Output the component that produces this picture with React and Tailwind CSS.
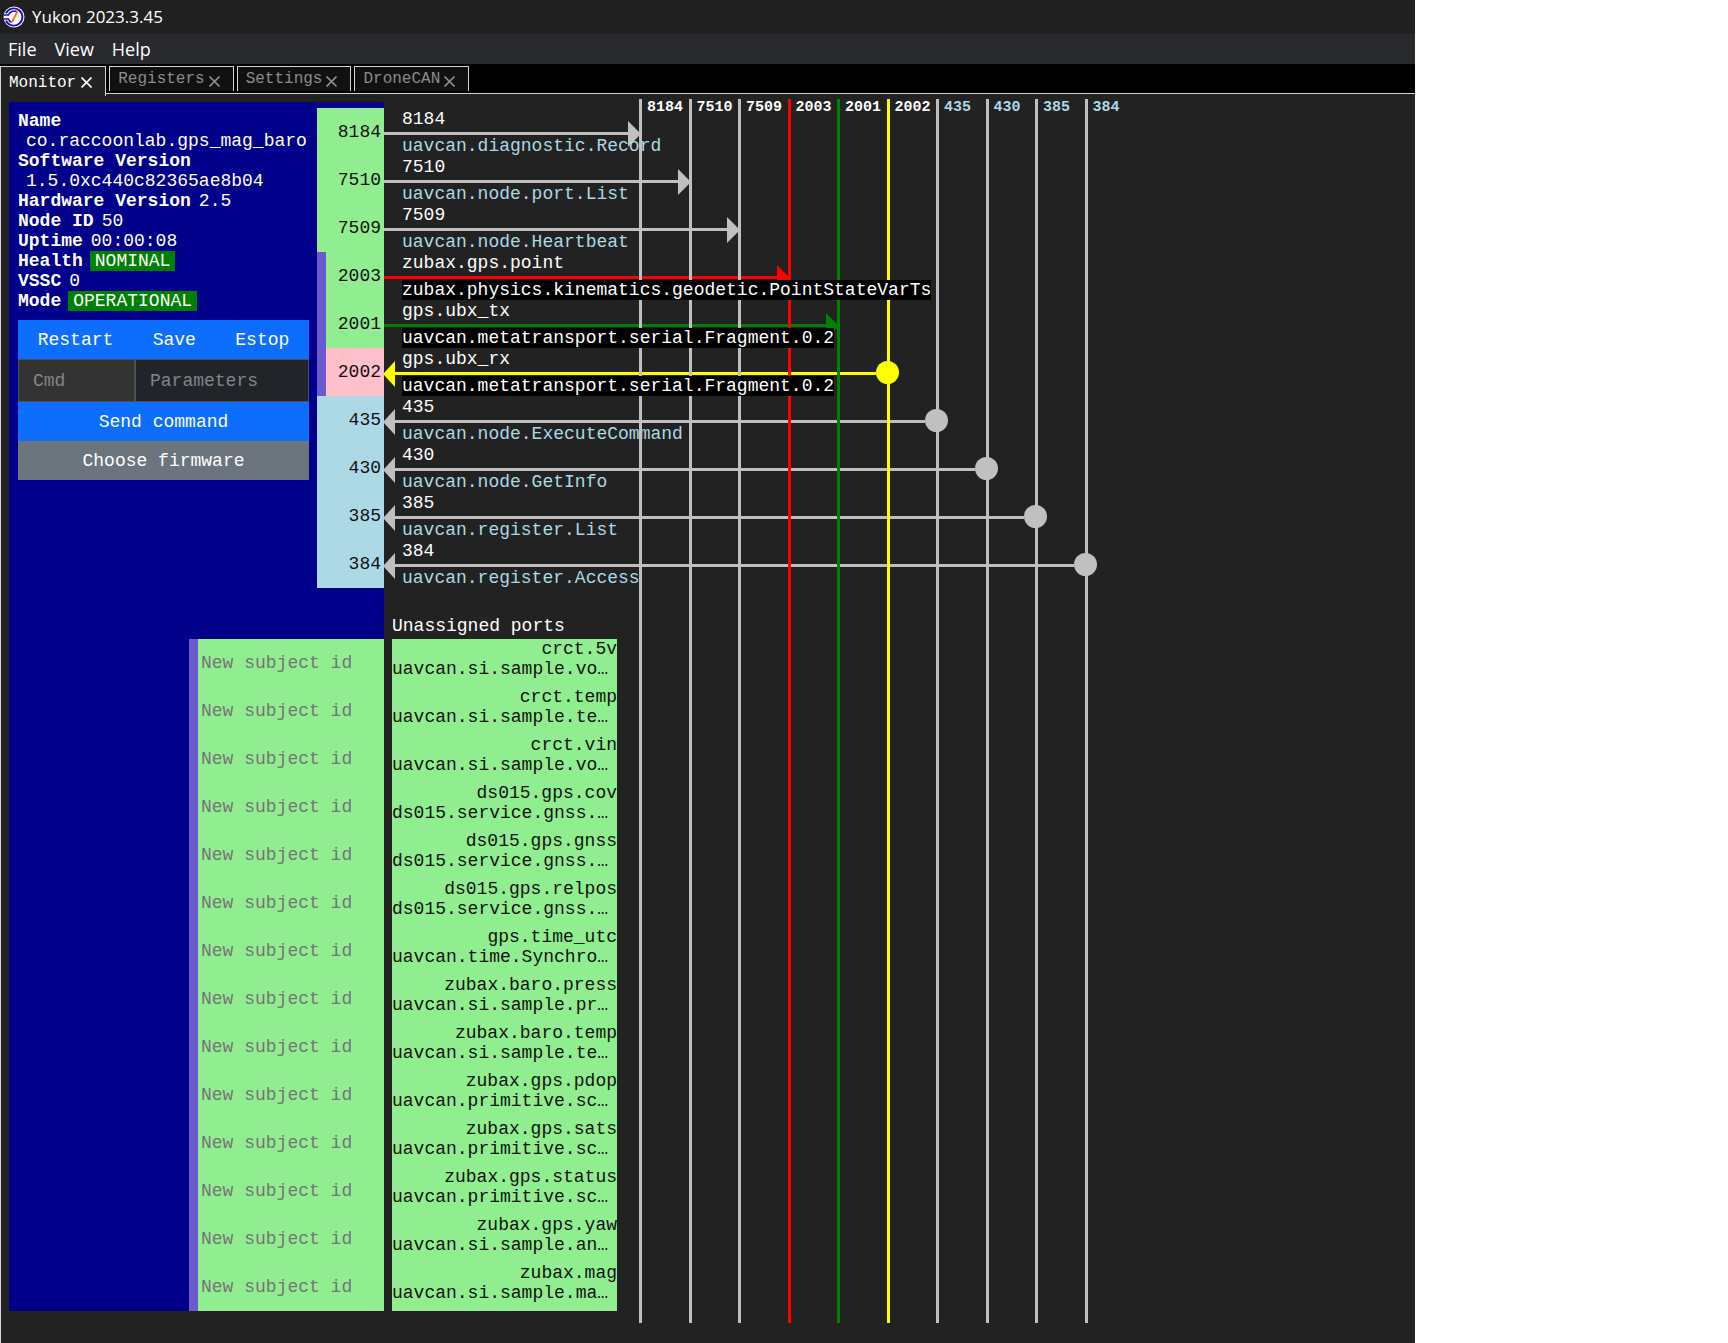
const WIRE_START = 255;
const BUS_PITCH = 49.5;

const tabs = ["Registers", "Settings", "DroneCAN"];

const menus = ["File", "View", "Help"];

const info = [
  { label: "Hardware Version", value: "2.5" },
  { label: "Node ID", value: "50" },
  { label: "Uptime", value: "00:00:08" },
  { label: "Health", value: "NOMINAL", badge: true },
  { label: "VSSC", value: "0" },
  { label: "Mode", value: "OPERATIONAL", badge: true },
];

const silver = { wire: "bg-[#c0c0c0]", fill: "fill-[#c0c0c0]", bus: "border-[#c0c0c0]" };
const red = { wire: "bg-[#ff0000]", fill: "fill-[#ff0000]", bus: "border-[#ff0000]" };
const green = { wire: "bg-[#008000]", fill: "fill-[#008000]", bus: "border-[#008000]" };
const yellow = { wire: "bg-[#ffff00]", fill: "fill-[#ffff00]", bus: "border-[#ffff00]" };

const pub = "bg-[#90ee90]";
const sub = "bg-[#ffc0cb]";
const srv = "bg-[#add8e6]";

const ports = [
  { id: "8184", name: "8184", type: "uavcan.diagnostic.Record", out: true, cell: pub, color: silver },
  { id: "7510", name: "7510", type: "uavcan.node.port.List", out: true, cell: pub, color: silver },
  { id: "7509", name: "7509", type: "uavcan.node.Heartbeat", out: true, cell: pub, color: silver },
  { id: "2003", name: "zubax.gps.point", type: "zubax.physics.kinematics.geodetic.PointStateVarTs", out: true, cell: pub, color: red, named: true },
  { id: "2001", name: "gps.ubx_tx", type: "uavcan.metatransport.serial.Fragment.0.2", out: true, cell: pub, color: green, named: true },
  { id: "2002", name: "gps.ubx_rx", type: "uavcan.metatransport.serial.Fragment.0.2", cell: sub, color: yellow, named: true },
  { id: "435", name: "435", type: "uavcan.node.ExecuteCommand", cell: srv, color: silver, service: true },
  { id: "430", name: "430", type: "uavcan.node.GetInfo", cell: srv, color: silver, service: true },
  { id: "385", name: "385", type: "uavcan.register.List", cell: srv, color: silver, service: true },
  { id: "384", name: "384", type: "uavcan.register.Access", cell: srv, color: silver, service: true },
];

const unassigned = [
  ["crct.5v", "uavcan.si.sample.vo…"],
  ["crct.temp", "uavcan.si.sample.te…"],
  ["crct.vin", "uavcan.si.sample.vo…"],
  ["ds015.gps.cov", "ds015.service.gnss.…"],
  ["ds015.gps.gnss", "ds015.service.gnss.…"],
  ["ds015.gps.relpos", "ds015.service.gnss.…"],
  ["gps.time_utc", "uavcan.time.Synchro…"],
  ["zubax.baro.press", "uavcan.si.sample.pr…"],
  ["zubax.baro.temp", "uavcan.si.sample.te…"],
  ["zubax.gps.pdop", "uavcan.primitive.sc…"],
  ["zubax.gps.sats", "uavcan.primitive.sc…"],
  ["zubax.gps.status", "uavcan.primitive.sc…"],
  ["zubax.gps.yaw", "uavcan.si.sample.an…"],
  ["zubax.mag", "uavcan.si.sample.ma…"],
];

function Logo() {
  return (
    <svg className="size-[22px]" viewBox="0 0 22 22" fill="none" aria-hidden="true">
      <circle cx="11" cy="11" r="10.5" fill="#fff" />
      <path d="M3 7.4A8.6 8.6 0 1 1 3 14.6" stroke="#1f10b0" strokeWidth="1.9" />
      <path d="M0.5 9H5.4A6 6 0 0 1 14 5.8M0.5 13H5.4A6 6 0 0 0 8.4 16.4" stroke="#1f10b0" strokeWidth="1.6" />
      <path d="M14.4 5.4L8.8 16.6" stroke="#ff6a13" strokeWidth="1.9" />
    </svg>
  );
}

function CloseMark() {
  return (
    <svg className="size-[11px] shrink-0" viewBox="0 0 11 11" fill="none" stroke="currentColor" strokeWidth="1.6" aria-hidden="true">
      <path d="M0.5 0.5L10.5 10.5M10.5 0.5L0.5 10.5" />
    </svg>
  );
}

function Tabs() {
  return (
    <div role="tablist" className="flex h-[30px] items-start gap-[3px] bg-black pt-[2px] text-base">
      <button
        role="tab"
        aria-selected="true"
        className="relative z-10 flex h-[30px] items-center gap-[5px] border border-b-0 border-[#d3d3d3] bg-[#222222] pt-[2px] pr-[13px] pl-2 text-white"
      >
        Monitor
        <CloseMark />
      </button>
      {tabs.map((t) => (
        <button
          key={t}
          role="tab"
          aria-selected="false"
          className="flex h-[25px] items-center gap-1 border border-b-0 border-[#d3d3d3] bg-[#111111] pr-[13px] pl-2 text-[#8c8c8c]"
        >
          {t}
          <span className="pt-[5px]">
            <CloseMark />
          </span>
        </button>
      ))}
    </div>
  );
}

function NodeInfo() {
  return (
    <div className="w-[291px] pt-[3px]">
      <dl className="whitespace-nowrap">
        <dt className="font-bold">Name</dt>
        <dd className="pl-2">co.raccoonlab.gps_mag_baro</dd>
        <dt className="font-bold">Software Version</dt>
        <dd className="pl-2">1.5.0xc440c82365ae8b04</dd>
        {info.map((i) => (
          <div key={i.label} className="flex">
            <dt className="font-bold">{i.label}</dt>
            <dd className={i.badge ? "ml-[7px] bg-[#008000] px-[5px]" : "ml-2"}>{i.value}</dd>
          </div>
        ))}
      </dl>
      <form className="mt-[9px]" onSubmit={(e) => e.preventDefault()}>
        <div className="flex bg-[#0d6efd]">
          <button type="button" className="h-[39px] flex-auto">Restart</button>
          <button type="button" className="h-[39px] flex-auto">Save</button>
          <button type="button" className="h-[39px] flex-auto">Estop</button>
        </div>
        <div className="flex h-[43px]">
          <input
            aria-label="Cmd"
            placeholder="Cmd"
            className="w-[117px] border border-[#495057] bg-[#333333] px-[14px] placeholder:text-[#80868a]"
          />
          <input
            aria-label="Parameters"
            placeholder="Parameters"
            className="w-0 flex-1 border border-[#495057] bg-[#212529] px-[14px] placeholder:text-[#80868a]"
          />
        </div>
        <button type="submit" className="h-[39px] w-full bg-[#0d6efd]">Send command</button>
        <button type="button" className="h-[39px] w-full bg-[#6c757d]">Choose firmware</button>
      </form>
    </div>
  );
}

function NodePanel() {
  return (
    <aside className="mt-2 w-[375px] shrink-0 self-start bg-[#00008b] pt-[6px]">
      <div className="flex justify-between pl-[9px]">
        <NodeInfo />
        <ul className="w-[67px] text-right text-[#111111]">
          {ports.map((p) => (
            <li
              key={p.id}
              className={`h-12 pr-[3px] leading-[48px] ${p.cell} ${p.named ? "border-l-[9px] border-[#6a5acd]" : ""}`}
            >
              {p.id}
            </li>
          ))}
        </ul>
      </div>
      <div className="mt-[51px] ml-auto w-[195px] border-l-[9px] border-[#6a5acd]">
        {unassigned.map(([name]) => (
          <input
            key={name}
            aria-label={`Subject id for ${name}`}
            placeholder="New subject id"
            className="block h-12 w-full bg-[#90ee90] px-[3px] text-black placeholder:text-[#757575]"
          />
        ))}
      </div>
    </aside>
  );
}

function Wire({ port, index }) {
  const width = Math.ceil(WIRE_START + index * BUS_PITCH) + (port.out ? 2 : 1);
  return (
    <div className="flex h-[3px] items-center" style={{ width }}>
      {!port.out && (
        <svg className={`h-[26px] w-[11px] shrink-0 ${port.color.fill}`} viewBox="0 0 11 26" aria-hidden="true">
          <path d="M11 0V26L0 14V12Z" />
        </svg>
      )}
      <span className={`h-[3px] flex-1 ${port.color.wire}`} />
      {port.out ? (
        <svg className={`h-[26px] w-[13px] shrink-0 ${port.color.fill}`} viewBox="0 0 13 26" aria-hidden="true">
          <path d="M0 0L13 13L0 26Z" />
        </svg>
      ) : (
        <svg className={`relative z-20 -mr-[11px] mb-[2px] size-[23px] shrink-0 ${port.color.fill}`} viewBox="0 0 23 23" aria-hidden="true">
          <circle cx="11.5" cy="11.5" r="11.5" />
        </svg>
      )}
    </div>
  );
}

function Diagram() {
  return (
    <section className="grid flex-1">
      <div className="col-start-1 row-start-1 pt-[14px]">
        {ports.map((p, i) => (
          <div key={p.id} className="flex h-12 flex-col items-start whitespace-nowrap">
            <span className="h-6 pt-px pl-[18px]">{p.name}</span>
            <Wire port={p} index={i} />
            <span
              className={
                p.named
                  ? "relative z-20 mt-px ml-[18px] bg-black"
                  : "relative mt-px ml-[18px] text-[#add8e6]"
              }
            >
              {p.type}
            </span>
          </div>
        ))}
        <h2 className="mt-7 ml-2">Unassigned ports</h2>
        <ul className="mt-[3px] ml-2 w-[225px] bg-[#90ee90] text-[#111111]">
          {unassigned.map(([name, type]) => (
            <li key={name} className="h-12">
              <p className="text-right">{name}</p>
              <p>{type}</p>
            </li>
          ))}
        </ul>
      </div>
      <div className="z-10 col-start-1 row-start-1 mt-[5px] mb-5 ml-[255px] grid w-[495px] grid-cols-10 text-[15px] leading-[18px] font-bold">
        {ports.map((p) => (
          <div key={p.id} className={`border-l-[3px] pl-[5px] ${p.color.bus} ${p.service ? "text-[#add8e6]" : "text-white"}`}>
            {p.id}
          </div>
        ))}
      </div>
    </section>
  );
}

export default function App() {
  return (
    <div className="min-h-screen bg-white pr-[313px]">
      <div className="flex min-h-screen flex-col bg-[#222222] font-['Liberation_Mono',monospace] text-lg leading-5 text-white">
        <header className="flex h-[34px] items-center gap-[7px] bg-[#202020] pl-[3px] font-['Open_Sans',sans-serif] text-[17px]">
          <Logo />
          <h1>Yukon 2023.3.45</h1>
        </header>
        <nav className="flex h-[30px] items-center gap-[18px] bg-[#292a2d] pl-2 font-['Open_Sans',sans-serif] text-lg">
          {menus.map((m) => (
            <button key={m}>{m}</button>
          ))}
        </nav>
        <Tabs />
        <main className="-mt-px flex flex-1 border-t border-l border-[#d3d3d3] pl-2">
          <NodePanel />
          <Diagram />
        </main>
      </div>
    </div>
  );
}
